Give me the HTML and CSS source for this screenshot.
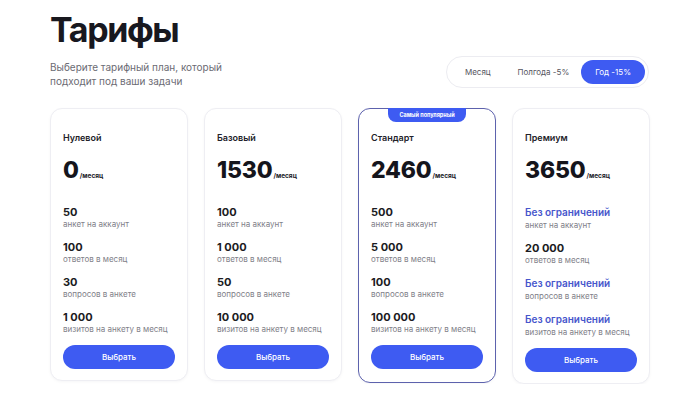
FILE: index.html
```html
<!DOCTYPE html>
<html lang="ru">
<head>
<meta charset="utf-8">
<link rel="stylesheet" href="styles.css">
</head>
<body>
<div class="page">
  <header class="header">
    <div class="intro">
      <h1 class="title">Тарифы</h1>
      <p class="subtitle">Выберите тарифный план, который подходит под ваши задачи</p>
    </div>
    <div class="toggle">
      <span class="toggle-item">Месяц</span>
      <span class="toggle-item">Полгода -5%</span>
      <span class="toggle-item active">Год -15%</span>
    </div>
  </header>

  <div class="cards">
    <div class="card">
      <div class="card-name">Нулевой</div>
      <div class="price"><span class="amount">0</span><span class="per">/месяц</span></div>
      <div class="features">
        <div class="feature"><div class="value">50</div><div class="label">анкет на аккаунт</div></div>
        <div class="feature"><div class="value">100</div><div class="label">ответов в месяц</div></div>
        <div class="feature"><div class="value">30</div><div class="label">вопросов в анкете</div></div>
        <div class="feature"><div class="value">1 000</div><div class="label">визитов на анкету в месяц</div></div>
      </div>
      <button class="btn">Выбрать</button>
    </div>

    <div class="card">
      <div class="card-name">Базовый</div>
      <div class="price"><span class="amount">1530</span><span class="per">/месяц</span></div>
      <div class="features">
        <div class="feature"><div class="value">100</div><div class="label">анкет на аккаунт</div></div>
        <div class="feature"><div class="value">1 000</div><div class="label">ответов в месяц</div></div>
        <div class="feature"><div class="value">50</div><div class="label">вопросов в анкете</div></div>
        <div class="feature"><div class="value">10 000</div><div class="label">визитов на анкету в месяц</div></div>
      </div>
      <button class="btn">Выбрать</button>
    </div>

    <div class="card popular">
      <div class="badge">Самый популярный</div>
      <div class="card-name">Стандарт</div>
      <div class="price"><span class="amount">2460</span><span class="per">/месяц</span></div>
      <div class="features">
        <div class="feature"><div class="value">500</div><div class="label">анкет на аккаунт</div></div>
        <div class="feature"><div class="value">5 000</div><div class="label">ответов в месяц</div></div>
        <div class="feature"><div class="value">100</div><div class="label">вопросов в анкете</div></div>
        <div class="feature"><div class="value">100 000</div><div class="label">визитов на анкету в месяц</div></div>
      </div>
      <button class="btn">Выбрать</button>
    </div>

    <div class="card">
      <div class="card-name">Премиум</div>
      <div class="price"><span class="amount">3650</span><span class="per">/месяц</span></div>
      <div class="features">
        <div class="feature"><div class="value unlimited">Без ограничений</div><div class="label">анкет на аккаунт</div></div>
        <div class="feature"><div class="value">20 000</div><div class="label">ответов в месяц</div></div>
        <div class="feature"><div class="value unlimited">Без ограничений</div><div class="label">вопросов в анкете</div></div>
        <div class="feature"><div class="value unlimited">Без ограничений</div><div class="label">визитов на анкету в месяц</div></div>
      </div>
      <button class="btn">Выбрать</button>
    </div>
  </div>
</div>
</body>
</html>
```

FILE: styles.css
```css
* { box-sizing: border-box; }

body {
  margin: 0;
  background: #ffffff;
  font-family: Inter, "Noto Sans", "DejaVu Sans", sans-serif;
  color: #1b1b22;
}

.page {
  width: 700px;
  padding: 10px 50px 0 50px;
}

.header {
  display: flex;
  justify-content: space-between;
  align-items: flex-end;
}

.title {
  margin: 0;
  font-size: 34px;
  line-height: 40px;
  font-weight: 700;
  letter-spacing: -1.4px;
  color: #18181f;
}

.subtitle {
  margin: 10px 0 0 0;
  width: 185px;
  font-size: 10px;
  line-height: 14px;
  color: #6b6b73;
}

.toggle {
  display: flex;
  padding: 3px;
  border: 1px solid #ececf1;
  border-radius: 16px;
  margin-right: 1px;
  background: #fff;
}

.toggle-item {
  height: 24px;
  display: flex;
  align-items: center;
  padding: 0 12px;
  font-size: 8px;
  color: #55555e;
  border-radius: 12px;
}

.toggle-item:first-child { padding: 0 15px; }

.toggle-item.active {
  background: #3e5bf2;
  color: #fff;
  padding: 0 14px;
}

.cards {
  margin-top: 20px;
  display: grid;
  grid-template-columns: repeat(4, 138px);
  gap: 16px;
  align-items: start;
}

.card {
  position: relative;
  border: 1px solid #eeeef3;
  border-radius: 12px;
  padding: 23px 12px 11px 12px;
  box-shadow: 0 1px 3px rgba(30, 30, 60, 0.04);
  background: #fff;
}

.card.popular {
  border-color: #5d62ad;
  padding-bottom: 13px;
}

.badge {
  position: absolute;
  top: -1px;
  left: 50%;
  transform: translateX(-50%);
  width: 78px;
  height: 14px;
  background: #3e5bf2;
  color: #fff;
  border-radius: 0 0 8px 8px;
  font-size: 5.5px;
  font-weight: 700;
  display: flex;
  align-items: center;
  justify-content: center;
}

.card-name {
  font-size: 9px;
  line-height: 12px;
  font-weight: 600;
  color: #222229;
}

.price {
  margin-top: 12px;
  height: 28px;
  display: flex;
  align-items: baseline;
}

.amount {
  font-size: 23px;
  line-height: 28px;
  font-weight: 800;
  letter-spacing: -0.2px;
  color: #15151c;
}

.per {
  margin-left: 1px;
  font-size: 6.5px;
  font-weight: 700;
  color: #222229;
}

.features {
  margin-top: 21px;
  display: flex;
  flex-direction: column;
  gap: 10px;
}

.value {
  font-size: 11px;
  line-height: 14px;
  font-weight: 700;
  color: #1b1b22;
}

.value.unlimited {
  font-size: 10px;
  line-height: 15px;
  font-weight: 600;
  color: #4756cc;
}

.label {
  font-size: 8px;
  line-height: 11px;
  color: #808088;
}

.btn {
  display: block;
  width: 100%;
  height: 24px;
  margin-top: 10px;
  border: none;
  border-radius: 12px;
  background: #3e5bf2;
  color: #fff;
  font-family: inherit;
  font-size: 8px;
  font-weight: 500;
}
```
